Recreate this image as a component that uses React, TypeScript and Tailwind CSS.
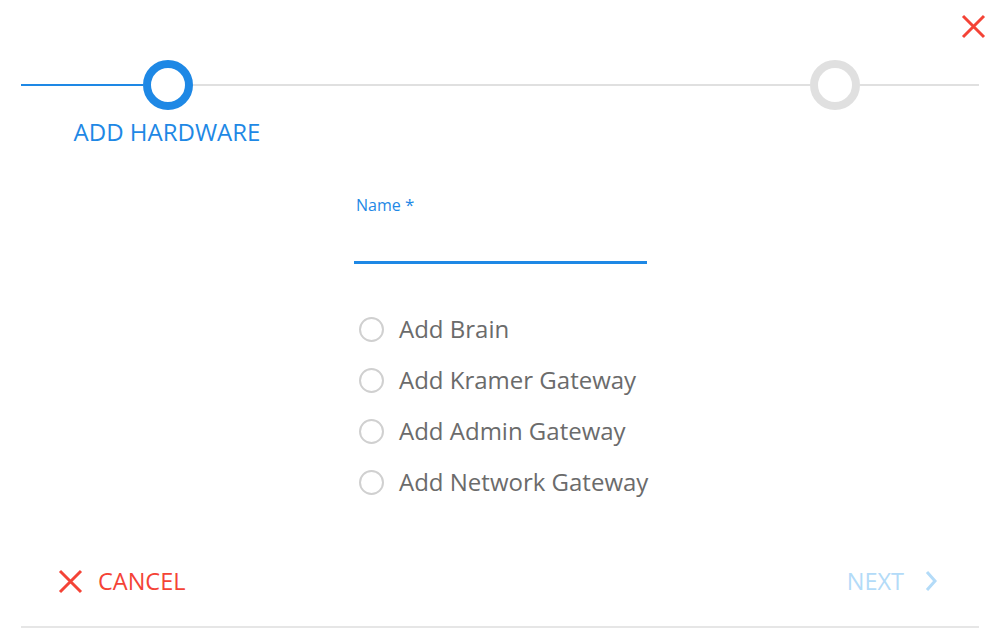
import React from "react";

const options = ["Add Brain", "Add Kramer Gateway", "Add Admin Gateway", "Add Network Gateway"];

export default function App() {
  return (
    <div className="w-[1000px] h-[644px] bg-white relative overflow-hidden" style={{ fontFamily: '"Open Sans", "Liberation Sans", sans-serif' }}>
      {/* close */}
      <button className="absolute left-[961px] top-[14px] w-[25px] h-[25px]">
        <svg viewBox="0 0 25 25" width="25" height="25">
          <path d="M2 2 L23 23 M23 2 L2 23" stroke="#f44336" strokeWidth="3" strokeLinecap="butt" />
        </svg>
      </button>

      {/* stepper */}
      <div className="pt-[60px] px-[21px] flex items-center">
        <div className="w-[122px] h-[2px] bg-[#1e88e5]" />
        <div className="w-[50px] h-[50px] rounded-full border-[8px] border-[#1e88e5] box-border" />
        <div className="flex-1 h-[2px] bg-[#e0e0e0]" />
        <div className="w-[50px] h-[50px] rounded-full border-[8px] border-[#e0e0e0] box-border" />
        <div className="w-[119px] h-[2px] bg-[#e0e0e0]" />
      </div>
      <div className="mt-[6px] w-[334px] flex justify-center">
        <span className="text-[24px] leading-[32px] text-[#1e88e5]">ADD HARDWARE</span>
      </div>

      {/* form */}
      <div className="ml-[354px] w-[293px] mt-[47px]">
        <div className="text-[16px] leading-[20px] text-[#1e88e5] pl-[2px]">Name <span className="text-[17px]">*</span></div>
        <div className="mt-[46px] h-[3px] bg-[#1e88e5]" />
        <div className="mt-[53px] flex flex-col gap-[27px]">
          {options.map((o) => (
            <label key={o} className="flex items-center h-[24px]">
              <span className="shrink-0 ml-[5px] w-[25px] h-[25px] rounded-full border-2 border-[#d0d0d0] box-border" />
              <span className="ml-[15px] text-[24px] leading-[24px] text-[#6b6b6b] whitespace-nowrap">{o}</span>
            </label>
          ))}
        </div>
      </div>

      {/* footer */}
      <div className="absolute left-0 right-0 top-[567px] px-[21px]">
        <div className="flex items-center justify-between h-[28px]">
          <button className="flex items-center ml-[37px] gap-[15px]">
            <svg viewBox="0 0 25 25" width="25" height="25">
              <path d="M2 2 L23 23 M23 2 L2 23" stroke="#f44336" strokeWidth="3" />
            </svg>
            <span className="text-[23.5px] leading-[28px] text-[#f44336]">CANCEL</span>
          </button>
          <button className="flex items-center mr-[41px] gap-[20px]">
            <span className="text-[23.5px] leading-[28px] text-[#b3dbf8]">NEXT</span>
            <svg viewBox="0 0 14 22" width="14" height="22">
              <path d="M3 2 L11 11 L3 20" stroke="#b3dbf8" strokeWidth="3" fill="none" />
            </svg>
          </button>
        </div>
        <div className="mt-[31px] h-[2px] bg-[#e6e6e6]" />
      </div>
    </div>
  );
}
